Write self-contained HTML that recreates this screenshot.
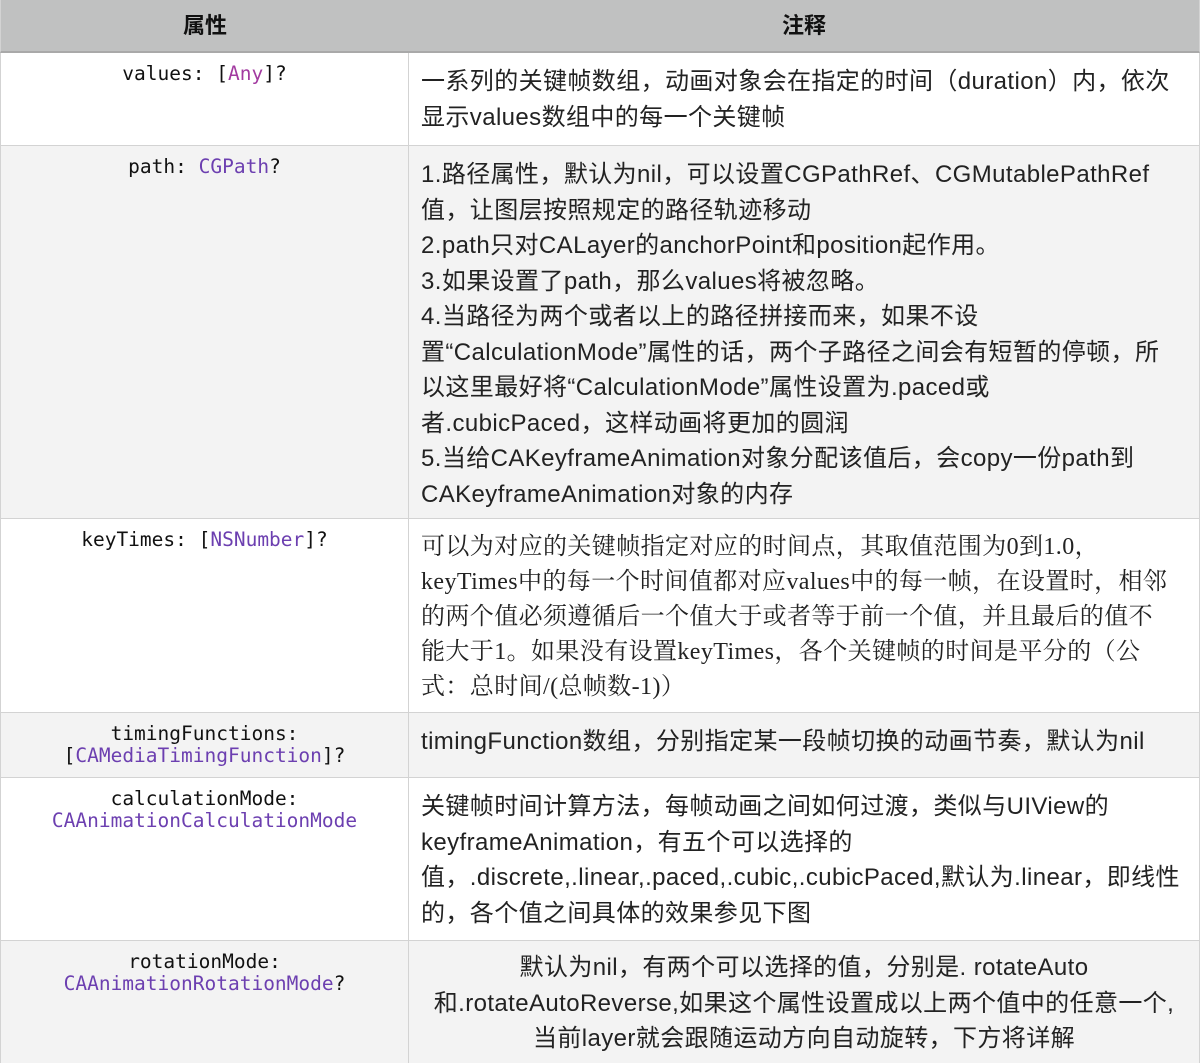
<!DOCTYPE html>
<html><head><meta charset="utf-8"><style>
*{margin:0;padding:0;box-sizing:border-box}
body{width:1200px;height:1063px;background:#fff;overflow:hidden;font-family:"Liberation Sans","Noto Sans CJK SC",sans-serif;color:#222}
.r{position:absolute;left:0;width:1200px;border-bottom:1px solid #d3d3d3;border-left:1px solid #d3d3d3;border-right:1px solid #d3d3d3}
.a{background:#f3f3f3}
.l{position:absolute;left:0;top:0;width:408px;height:100%;border-right:1px solid #d3d3d3;text-align:center;font-family:"DejaVu Sans Mono","Liberation Mono",monospace;font-size:19.5px;line-height:22px;padding-top:10px;color:#111}
.rt{position:absolute;left:420px;top:11px;font-size:24px;letter-spacing:0.4px;line-height:35.5px;white-space:nowrap;color:#222}
.p{color:#6c3fb0}.m{color:#a23aa0}
.h{background:#c0c1c1;height:53px;border-bottom:2px solid #a9a9a9}
.h div{position:absolute;top:0;line-height:52px;font-size:22px;font-weight:bold;text-align:center;color:#111}
.serif{font-family:"Liberation Serif","Noto Serif CJK SC",serif;line-height:35px}
</style></head><body>
<div class="r h" style="top:0"><div style="left:0;width:408px">属性</div><div style="left:408px;width:790px">注释</div></div>
<div class="r" style="top:53px;height:93px"><div class="l">values: [<span class="m">Any</span>]?</div><div class="rt">一系列的关键帧数组，动画对象会在指定的时间（duration）内，依次<br>显示values数组中的每一个关键帧</div></div>
<div class="r a" style="top:146px;height:373px"><div class="l">path: <span class="p">CGPath</span>?</div><div class="rt">1.路径属性，默认为nil，可以设置CGPathRef、CGMutablePathRef<br>值，让图层按照规定的路径轨迹移动<br>2.path只对CALayer的anchorPoint和position起作用。<br>3.如果设置了path，那么values将被忽略。<br>4.当路径为两个或者以上的路径拼接而来，如果不设<br>置“CalculationMode”属性的话，两个子路径之间会有短暂的停顿，所<br>以这里最好将“CalculationMode”属性设置为.paced或<br>者.cubicPaced，这样动画将更加的圆润<br>5.当给CAKeyframeAnimation对象分配该值后，会copy一份path到<br>CAKeyframeAnimation对象的内存</div></div>
<div class="r" style="top:519px;height:194px"><div class="l">keyTimes: [<span class="p">NSNumber</span>]?</div><div class="rt serif">可以为对应的关键帧指定对应的时间点，其取值范围为0到1.0，<br>keyTimes中的每一个时间值都对应values中的每一帧，在设置时，相邻<br>的两个值必须遵循后一个值大于或者等于前一个值，并且最后的值不<br>能大于1。如果没有设置keyTimes，各个关键帧的时间是平分的（公<br>式：总时间/(总帧数-1)）</div></div>
<div class="r a" style="top:713px;height:65px"><div class="l">timingFunctions:<br>[<span class="p">CAMediaTimingFunction</span>]?</div><div class="rt">timingFunction数组，分别指定某一段帧切换的动画节奏，默认为nil</div></div>
<div class="r" style="top:778px;height:163px"><div class="l">calculationMode:<br><span class="p">CAAnimationCalculationMode</span></div><div class="rt">关键帧时间计算方法，每帧动画之间如何过渡，类似与UIView的<br>keyframeAnimation，有五个可以选择的<br>值，.discrete,.linear,.paced,.cubic,.cubicPaced,默认为.linear，即线性<br>的，各个值之间具体的效果参见下图</div></div>
<div class="r a" style="top:941px;height:122px;border-bottom:none"><div class="l">rotationMode:<br><span class="p">CAAnimationRotationMode</span>?</div><div class="rt" style="left:408px;width:790px;text-align:center;top:9px">默认为nil，有两个可以选择的值，分别是. rotateAuto<br>和.rotateAutoReverse,如果这个属性设置成以上两个值中的任意一个,<br>当前layer就会跟随运动方向自动旋转，下方将详解</div></div>
</body></html>
